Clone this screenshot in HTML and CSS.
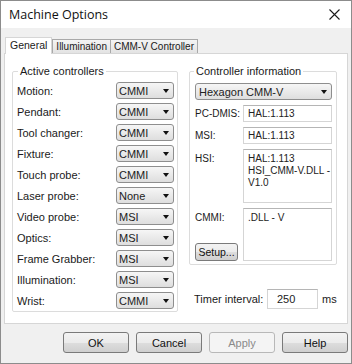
FILE: index.html
```html
<!DOCTYPE html>
<html>
<head>
  <link rel="stylesheet" href="styles.css">
</head>
<body>
  <div class="window">
    <div class="titlebar">
      <span class="title">Machine Options</span>
      <svg class="close" width="11" height="11" viewBox="0 0 11 11">
        <path d="M0.5 0.5 L10.5 10.5 M10.5 0.5 L0.5 10.5" stroke="#1a1a1a" stroke-width="1.1" fill="none" />
      </svg>
    </div>

    <div class="client">
      <div class="tabs">
        <div class="tab active">General</div>
        <div class="tab">Illumination</div>
        <div class="tab">CMM-V Controller</div>
      </div>

      <div class="panel">
        <fieldset class="group left-group">
          <legend>Active controllers</legend>
          <div class="row"><span>Motion:</span><div class="combo"><span>CMMI</span><i class="arrow"></i></div></div>
          <div class="row"><span>Pendant:</span><div class="combo"><span>CMMI</span><i class="arrow"></i></div></div>
          <div class="row"><span>Tool changer:</span><div class="combo"><span>CMMI</span><i class="arrow"></i></div></div>
          <div class="row"><span>Fixture:</span><div class="combo"><span>CMMI</span><i class="arrow"></i></div></div>
          <div class="row"><span>Touch probe:</span><div class="combo"><span>CMMI</span><i class="arrow"></i></div></div>
          <div class="row"><span>Laser probe:</span><div class="combo"><span>None</span><i class="arrow"></i></div></div>
          <div class="row"><span>Video probe:</span><div class="combo"><span>MSI</span><i class="arrow"></i></div></div>
          <div class="row"><span>Optics:</span><div class="combo"><span>MSI</span><i class="arrow"></i></div></div>
          <div class="row"><span>Frame Grabber:</span><div class="combo"><span>MSI</span><i class="arrow"></i></div></div>
          <div class="row"><span>Illumination:</span><div class="combo"><span>MSI</span><i class="arrow"></i></div></div>
          <div class="row"><span>Wrist:</span><div class="combo"><span>CMMI</span><i class="arrow"></i></div></div>
        </fieldset>

        <div class="right-col">
          <fieldset class="group right-group">
            <legend>Controller information</legend>
            <div class="combo wide"><span>Hexagon CMM-V</span><i class="arrow"></i></div>
            <div class="info">
              <span class="info-label">PC-DMIS:</span>
              <div class="field">HAL:1.113</div>
              <span class="info-label">MSI:</span>
              <div class="field">HAL:1.113</div>
              <span class="info-label top">HSI:</span>
              <div class="field multi">HAL:1.113<br>HSI_CMM-V.DLL -<br>V1.0</div>
              <div class="cmmi-cell">
                <span class="info-label top">CMMI:</span>
                <div class="btn setup">Setup...</div>
              </div>
              <div class="field multi">.DLL - V</div>
            </div>
          </fieldset>

          <div class="timer">
            <span class="timer-label">Timer interval:</span>
            <div class="field timer-input">250</div>
            <span>ms</span>
          </div>
        </div>
      </div>

      <div class="buttons">
        <div class="btn">OK</div>
        <div class="btn">Cancel</div>
        <div class="btn disabled">Apply</div>
        <div class="btn">Help</div>
      </div>
    </div>
  </div>
</body>
</html>
```

FILE: styles.css
```css
body {
  margin: 0;
  font-family: "Liberation Sans", Arial, sans-serif;
  font-size: 11px;
  color: #1a1a1a;
}

.window {
  width: 352px;
  height: 364px;
  box-sizing: border-box;
  border: 1px solid #8c8c8c;
  display: flex;
  flex-direction: column;
  background: #f0f0f0;
}

.titlebar {
  height: 27px;
  flex: none;
  background: #fff;
  display: flex;
  align-items: center;
  justify-content: space-between;
  padding: 0 11px 0 8px;
}

.title {
  font-family: "Open Sans", "Noto Sans", sans-serif;
  font-size: 12.5px;
  color: #111;
}

.client {
  flex: 1;
  padding: 9px 3px 0 3px;
}

.tabs {
  display: flex;
  align-items: flex-end;
  height: 16px;
}

.tab {
  position: relative;
  height: 13px;
  line-height: 13px;
  padding: 0 3px;
  margin-left: -1px;
  border: 1px solid #a9a9a9;
  border-bottom: none;
  background: linear-gradient(#f4f4f4, #e3e3e3);
  font-size: 10px;
  white-space: nowrap;
}

.tab.active {
  z-index: 1;
  height: 16px;
  line-height: 15px;
  margin-bottom: -1px;
  margin-left: 1px;
  margin-right: 1px;
  padding: 0 4px;
  background: #fff;
  border-color: #d6d6d6;
  font-size: 10.5px;
}

.panel {
  height: 271px;
  box-sizing: border-box;
  background: #fff;
  border: 1px solid #d6d6d6;
  display: flex;
  gap: 11px;
  padding: 11px 8px 0 7px;
}

.group {
  margin: 0;
  border: 1px solid #dcdcdc;
  border-radius: 2px;
  box-sizing: border-box;
  min-inline-size: 0;
}

.group legend {
  padding: 0 2px;
  line-height: 13px;
}

.left-group {
  width: 166px;
  height: 247px;
  padding: 2px 3px 0 4px;
}

.left-group legend {
  margin-left: 1px;
}

.row {
  height: 21px;
  display: flex;
  align-items: center;
  justify-content: space-between;
  white-space: nowrap;
}

.combo {
  width: 58px;
  height: 17px;
  box-sizing: border-box;
  border: 1px solid #8e8e8e;
  border-radius: 3px;
  background: linear-gradient(#f6f6f6, #dedede);
  display: flex;
  align-items: center;
  justify-content: space-between;
  padding: 0 4px 0 2px;
  color: #222;
}

.combo.wide {
  width: 137px;
  margin: 5px 0 5px;
  padding-left: 3px;
}

.arrow {
  width: 0;
  height: 0;
  border-left: 3.5px solid transparent;
  border-right: 3.5px solid transparent;
  border-top: 4px solid #111;
}

.right-col {
  width: 148px;
  display: flex;
  flex-direction: column;
}

.right-group {
  height: 200px;
  padding: 0 4px 0 5px;
}

.right-group legend {
  margin-left: -1px;
}

.info {
  display: grid;
  grid-template-columns: 48px 89px;
  grid-template-rows: 17px 17px 54px 53px;
  row-gap: 5px;
  font-size: 10px;
}

.info-label {
  align-self: center;
  white-space: nowrap;
}

.info-label.top {
  align-self: start;
  padding-top: 4px;
}

.cmmi-cell {
  display: flex;
  flex-direction: column;
  justify-content: space-between;
  align-items: flex-start;
}

.field {
  box-sizing: border-box;
  border: 1px solid #d5d5d5;
  border-top-color: #b5b5b5;
  background: #fff;
  padding: 0 4px;
  display: flex;
  align-items: center;
  color: #222;
  white-space: nowrap;
}

.field.multi {
  display: block;
  padding: 3px 4px;
  line-height: 12px;
}

.btn {
  width: 66px;
  height: 21px;
  box-sizing: border-box;
  border: 1px solid #7a7a7a;
  border-radius: 3px;
  background: linear-gradient(#f3f3f3 0%, #ebebeb 50%, #dddddd 51%, #cfcfcf 100%);
  display: flex;
  align-items: center;
  justify-content: center;
  color: #111;
  font-size: 11px;
}

.btn.setup {
  width: 43px;
  height: 18px;
  font-size: 10.5px;
}

.btn.disabled {
  border-color: #b8b8b8;
  background: #f4f4f4;
  color: #8a8a8a;
}

.timer {
  display: flex;
  align-items: center;
  margin: 24px 0 0 5px;
}

.timer-label {
  width: 73px;
}

.timer-input {
  width: 51px;
  height: 20px;
  padding-left: 9px;
  margin-right: 4px;
}

.buttons {
  display: flex;
  justify-content: flex-end;
  gap: 7px;
  margin-top: 8px;
}
```
